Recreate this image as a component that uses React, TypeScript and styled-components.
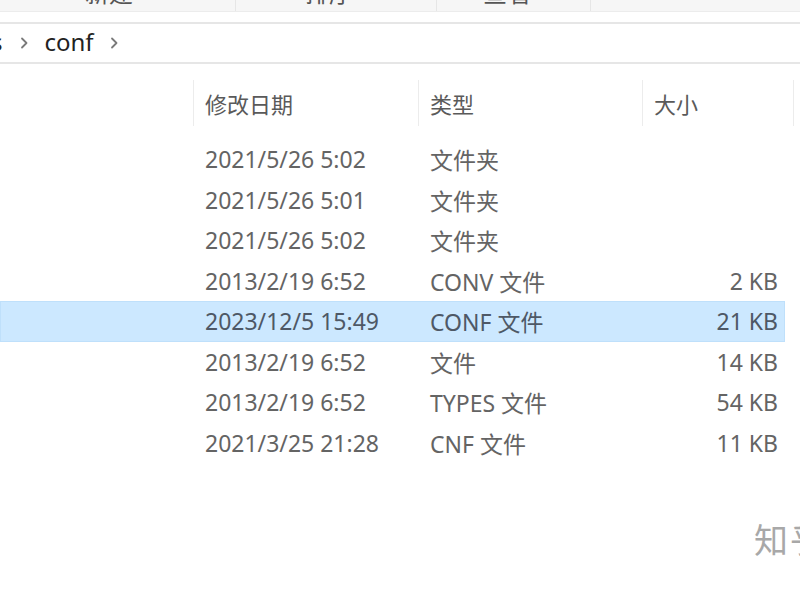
import React from "react";
import styled, { createGlobalStyle } from "styled-components";

type Row = {
  date: string;
  type: string;
  size: string;
  selected?: boolean;
};

const rows: Row[] = [
  { date: "2021/5/26 5:02", type: "文件夹", size: "" },
  { date: "2021/5/26 5:01", type: "文件夹", size: "" },
  { date: "2021/5/26 5:02", type: "文件夹", size: "" },
  { date: "2013/2/19 6:52", type: "CONV 文件", size: "2 KB" },
  { date: "2023/12/5 15:49", type: "CONF 文件", size: "21 KB", selected: true },
  { date: "2013/2/19 6:52", type: "文件", size: "14 KB" },
  { date: "2013/2/19 6:52", type: "TYPES 文件", size: "54 KB" },
  { date: "2021/3/25 21:28", type: "CNF 文件", size: "11 KB" },
];

const tools = [
  { label: "新建", w: 235, pad: 85 },
  { label: "排序", w: 200, pad: 69 },
  { label: "查看", w: 153, pad: 46 },
];

const GlobalStyle = createGlobalStyle`
  html, body {
    margin: 0;
    padding: 0;
    background: #ffffff;
    overflow: hidden;
  }
  body {
    font-family: "Noto Sans", "Noto Sans CJK SC", sans-serif;
  }
`;

const Page = styled.div`
  width: 800px;
  height: 600px;
  position: relative;
  overflow: hidden;
  background: #ffffff;
`;

const Toolbar = styled.div`
  height: 11px;
  background: #f6f6f6;
  border-bottom: 1px solid #ececec;
  display: flex;
  overflow: hidden;
`;

const ToolGroup = styled.div<{ $w: number }>`
  width: ${(p) => p.$w}px;
  flex: none;
  border-right: 1px solid #e6e6e6;
  display: flex;
  align-items: flex-start;
  overflow: hidden;
`;

const ToolLabel = styled.span<{ $pad: number }>`
  margin-left: ${(p) => p.$pad}px;
  margin-top: -19px;
  font-size: 24px;
  line-height: 24px;
  color: #555;
`;

const Gap = styled.div`
  height: 10px;
`;

const AddressBar = styled.div`
  height: 38px;
  border-top: 2px solid #e6e6e6;
  border-bottom: 2px solid #e6e6e6;
  display: flex;
  align-items: center;
`;

const Crumb = styled.span<{ $ml?: number }>`
  margin-left: ${(p) => p.$ml ?? 0}px;
  font-size: 24px;
  color: #222;
  margin-top: -3px;
`;

const Chevron = styled.span<{ $ml: number }>`
  margin-left: ${(p) => p.$ml}px;
  margin-right: 16px;
  display: flex;
  align-items: center;
`;

const Header = styled.div`
  margin-top: 16px;
  height: 46px;
  display: flex;
  align-items: center;
`;

const HeadCell = styled.div<{ $w: number; $left?: number }>`
  width: ${(p) => p.$w}px;
  margin-left: ${(p) => p.$left ?? 0}px;
  height: 46px;
  flex: none;
  border-left: 1px solid #ececec;
  box-sizing: border-box;
  padding-left: 11px;
  display: flex;
  align-items: center;
  font-size: 22px;
  color: #5a5a5a;
`;

const List = styled.div`
  margin-top: 13px;
  width: 785px;
`;

const RowLine = styled.div<{ $sel?: boolean }>`
  height: 40.5px;
  display: flex;
  align-items: center;
  box-sizing: border-box;
  background: ${(p) => (p.$sel ? "#cce8ff" : "transparent")};
  border: 1px solid ${(p) => (p.$sel ? "#bfe0fb" : "transparent")};
  font-size: 23px;
  color: ${(p) => (p.$sel ? "#4e5866" : "#646464")};
`;

const DateCell = styled.div`
  width: 225px;
  margin-left: 204px;
  flex: none;
  white-space: nowrap;
`;

const TypeCell = styled.div`
  width: 200px;
  flex: none;
  white-space: nowrap;
`;

const SizeCell = styled.div`
  width: 148px;
  flex: none;
  text-align: right;
  white-space: nowrap;
`;

const Watermark = styled.div`
  position: absolute;
  left: 754px;
  top: 514px;
  font-size: 34px;
  color: #a8a8a8;
  letter-spacing: 2px;
  white-space: nowrap;
`;

const ChevronIcon = () => (
  <svg width="10" height="14" viewBox="0 0 10 14">
    <path
      d="M3 2.5 L7.5 7 L3 11.5"
      fill="none"
      stroke="#7a7a7a"
      strokeWidth="1.8"
      strokeLinecap="round"
      strokeLinejoin="round"
    />
  </svg>
);

export default function App() {
  return (
    <Page>
      <GlobalStyle />
      <Toolbar>
        {tools.map((t) => (
          <ToolGroup key={t.label} $w={t.w}>
            <ToolLabel $pad={t.pad}>{t.label}</ToolLabel>
          </ToolGroup>
        ))}
      </Toolbar>
      <Gap />
      <AddressBar>
        <Crumb $ml={-9}>s</Crumb>
        <Chevron $ml={16}>
          <ChevronIcon />
        </Chevron>
        <Crumb>conf</Crumb>
        <Chevron $ml={15}>
          <ChevronIcon />
        </Chevron>
      </AddressBar>
      <Header>
        <HeadCell $w={225} $left={193}>修改日期</HeadCell>
        <HeadCell $w={224}>类型</HeadCell>
        <HeadCell $w={151}>大小</HeadCell>
        <HeadCell $w={10} />
      </Header>
      <List>
        {rows.map((r, i) => (
          <RowLine key={i} $sel={r.selected}>
            <DateCell>{r.date}</DateCell>
            <TypeCell>{r.type}</TypeCell>
            <SizeCell>{r.size}</SizeCell>
          </RowLine>
        ))}
      </List>
      <Watermark>知乎</Watermark>
    </Page>
  );
}
